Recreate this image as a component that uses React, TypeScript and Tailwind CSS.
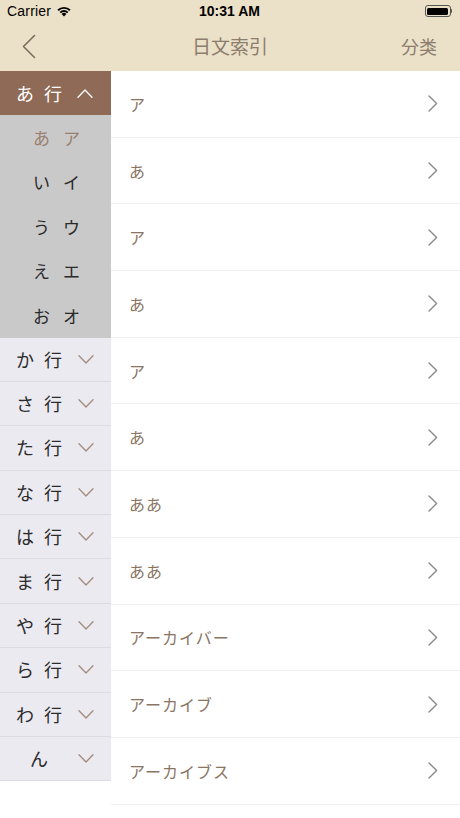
import React from 'react';

const font = { fontFamily: '"Noto Sans CJK JP", "Liberation Sans", sans-serif' };

const rows = ['か', 'さ', 'た', 'な', 'は', 'ま', 'や', 'ら', 'わ'];
const subs = [
  ['あ', 'ア'],
  ['い', 'イ'],
  ['う', 'ウ'],
  ['え', 'エ'],
  ['お', 'オ'],
];
const items = ['ア', 'あ', 'ア', 'あ', 'ア', 'あ', 'ああ', 'ああ', 'アーカイバー', 'アーカイブ', 'アーカイブス'];

function ChevronDown({ up = false, color }: { up?: boolean; color: string }) {
  return (
    <svg width="16" height="9" viewBox="0 0 16 9" fill="none">
      <path
        d={up ? 'M1 8.2 L8 1 L15 8.2' : 'M1 0.8 L8 8 L15 0.8'}
        stroke={color}
        strokeWidth="1.3"
        strokeLinecap="round"
        strokeLinejoin="round"
      />
    </svg>
  );
}

function ChevronRight() {
  return (
    <svg width="10" height="17" viewBox="0 0 10 17" fill="none">
      <path d="M1 1 L8.6 8.5 L1 16" stroke="#8a8a8a" strokeWidth="1.4" strokeLinecap="round" strokeLinejoin="round" />
    </svg>
  );
}

export default function App() {
  return (
    <div className="w-[460px] h-[818px] overflow-hidden bg-white flex flex-col" style={font}>
      {/* Status bar */}
      <div className="h-[22px] bg-[#ebe1c8] flex items-center px-[7px] text-[14px] text-black">
        <div className="flex-1 flex items-center gap-[5px]">
          <span className="tracking-[0.2px]" style={{ fontFamily: '"Liberation Sans", sans-serif' }}>Carrier</span>
          <svg width="16" height="12" viewBox="0 0 16 12">
            <path d="M8 11.5 L5.6 8.9 A3.5 3.5 0 0 1 10.4 8.9 Z" fill="#000" />
            <path d="M3.6 6.9 A6.3 6.3 0 0 1 12.4 6.9 L11.1 8.3 A4.4 4.4 0 0 0 4.9 8.3 Z" fill="#000" />
            <path d="M1.4 4.6 A9.4 9.4 0 0 1 14.6 4.6 L13.3 6 A7.5 7.5 0 0 0 2.7 6 Z" fill="#000" />
          </svg>
        </div>
        <span className="font-bold text-[14px]" style={{ fontFamily: '"Liberation Sans", sans-serif' }}>10:31 AM</span>
        <div className="flex-1 flex justify-end items-center pr-[1px]">
          <div className="w-[26px] h-[12px] rounded-[3px] border border-[#555] p-[1.5px]">
            <div className="w-full h-full bg-black rounded-[1.5px]" />
          </div>
          <div className="w-[1.5px] h-[4px] bg-[#555] rounded-r-sm" />
        </div>
      </div>

      {/* Nav bar */}
      <div className="h-[49px] bg-[#ebe1c8] flex items-center">
        <div className="w-[60px] pl-[22px] flex items-center">
          <svg width="14" height="25" viewBox="0 0 14 25" fill="none">
            <path d="M12.5 1.5 L1.5 12.5 L12.5 23.5" stroke="#7b6d5f" strokeWidth="1.6" strokeLinecap="round" strokeLinejoin="round" />
          </svg>
        </div>
        <div className="flex-1 text-center text-[19px] text-[#8c7d6e]">日文索引</div>
        <div className="w-[60px] pr-[23px] text-right text-[18px] text-[#8c7d6e] whitespace-nowrap">分类</div>
      </div>

      {/* Body */}
      <div className="flex flex-1 min-h-0">
        {/* Left index column */}
        <div className="w-[111px] flex flex-col shrink-0">
          <div className="h-[44px] bg-[#8f6a56] flex items-center pl-[16px] text-white text-[18px]">
            <span className="w-[28px]">あ</span>
            <span className="w-[33px]">行</span>
            <ChevronDown up color="#ffffff" />
          </div>
          {subs.map(([h, k], i) => (
            <div
              key={h}
              className={`h-[44.5px] bg-[#c9c9c9] flex items-center pl-[33px] text-[17px] ${
                i === 0 ? 'text-[#9a8070]' : 'text-[#2a2a2a]'
              }`}
            >
              <span className="w-[30px]">{h}</span>
              <span>{k}</span>
            </div>
          ))}
          {rows.map((r) => (
            <div
              key={r}
              className="h-[44.4px] bg-[#ebeaf1] border-b border-[#dcdbe2] flex items-center pl-[16px] text-[18px] text-[#2a2a2a]"
            >
              <span className="w-[28px]">{r}</span>
              <span className="w-[34px]">行</span>
              <ChevronDown color="#a38b7c" />
            </div>
          ))}
          <div className="h-[44.4px] bg-[#ebeaf1] border-b border-[#dcdbe2] flex items-center pl-[30px] text-[18px] text-[#2a2a2a]">
            <span className="w-[48px]">ん</span>
            <ChevronDown color="#a38b7c" />
          </div>
        </div>

        {/* Right list */}
        <div className="flex-1 flex flex-col min-w-0">
          {items.map((t, i) => (
            <div
              key={i}
              className="h-[66.7px] shrink-0 border-b border-[#efefef] flex items-center pl-[18px] pr-[22px] text-[16px] text-[#8a7565]"
            >
              <span className="flex-1 tracking-[1px]">{t}</span>
              <ChevronRight />
            </div>
          ))}
        </div>
      </div>
    </div>
  );
}
